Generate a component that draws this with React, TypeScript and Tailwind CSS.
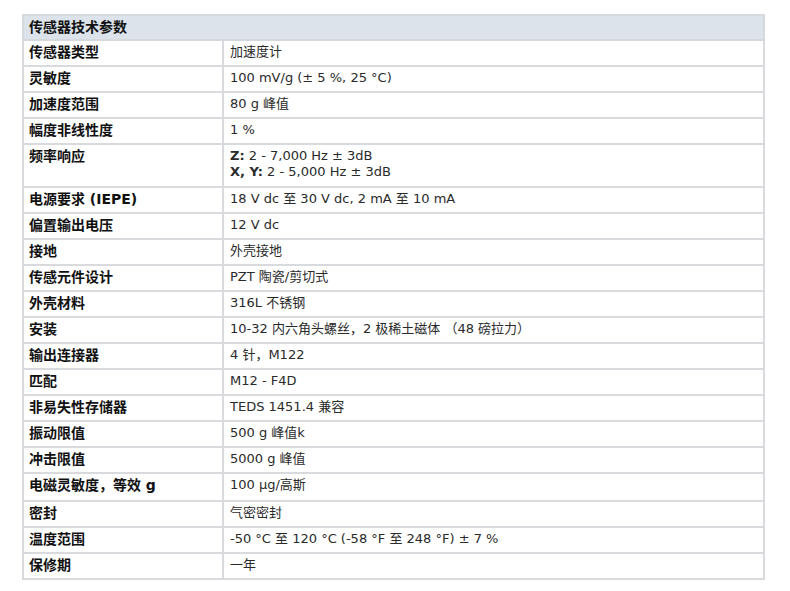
const rows: [string, React.ReactNode][] = [
  ["传感器类型", "加速度计"],
  ["灵敏度", "100 mV/g (± 5 %, 25 °C)"],
  ["加速度范围", "80 g 峰值"],
  ["幅度非线性度", "1 %"],
  [
    "频率响应",
    <>
      <div>
        <b>Z:</b> 2 - 7,000 Hz ± 3dB
      </div>
      <div>
        <b>X, Y:</b> 2 - 5,000 Hz ± 3dB
      </div>
    </>,
  ],
  ["电源要求 (IEPE)", "18 V dc 至 30 V dc, 2 mA 至 10 mA"],
  ["偏置输出电压", "12 V dc"],
  ["接地", "外壳接地"],
  ["传感元件设计", "PZT 陶瓷/剪切式"],
  ["外壳材料", "316L 不锈钢"],
  ["安装", "10-32 内六角头螺丝，2 极稀土磁体 （48 磅拉力）"],
  ["输出连接器", "4 针，M122"],
  ["匹配", "M12 - F4D"],
  ["非易失性存储器", "TEDS 1451.4 兼容"],
  ["振动限值", "500 g 峰值k"],
  ["冲击限值", "5000 g 峰值"],
  ["电磁灵敏度，等效 g", "100 µg/高斯"],
  ["密封", "气密密封"],
  ["温度范围", "-50 °C 至 120 °C (-58 °F 至 248 °F) ± 7 %"],
  ["保修期", "一年"],
];

export default function App() {
  return (
    <div className="min-h-[591px] w-[790px] bg-white pl-[22px] pt-[14px] font-['DejaVu_Sans','Noto_Sans_CJK_SC',sans-serif] text-[13px]">
      <table className="w-[743px] border-collapse border border-[#d5d8dc]">
        <tbody>
          <tr className="h-[25px] bg-[#dce3eb]">
            <td colSpan={2} className="border-2 border-[#d5d8dc] px-[5px] align-middle text-[14px] font-bold text-[#111]">
              传感器技术参数
            </td>
          </tr>
          {rows.map(([label, value], i) => (
            <tr key={i} className={i === 4 ? "h-[43px]" : i === 16 ? "h-[28px]" : "h-[26px]"}>
              <td className="w-[200px] border-2 border-[#d8dadd] px-[5px] pt-[3px] align-top text-[14px] font-bold leading-[16px] text-[#111]">
                {label}
              </td>
              <td className="border-2 border-[#d8dadd] px-[6px] pt-[3px] align-top leading-[16px] text-[#2a2a2a]">
                {value}
              </td>
            </tr>
          ))}
        </tbody>
      </table>
    </div>
  );
}
